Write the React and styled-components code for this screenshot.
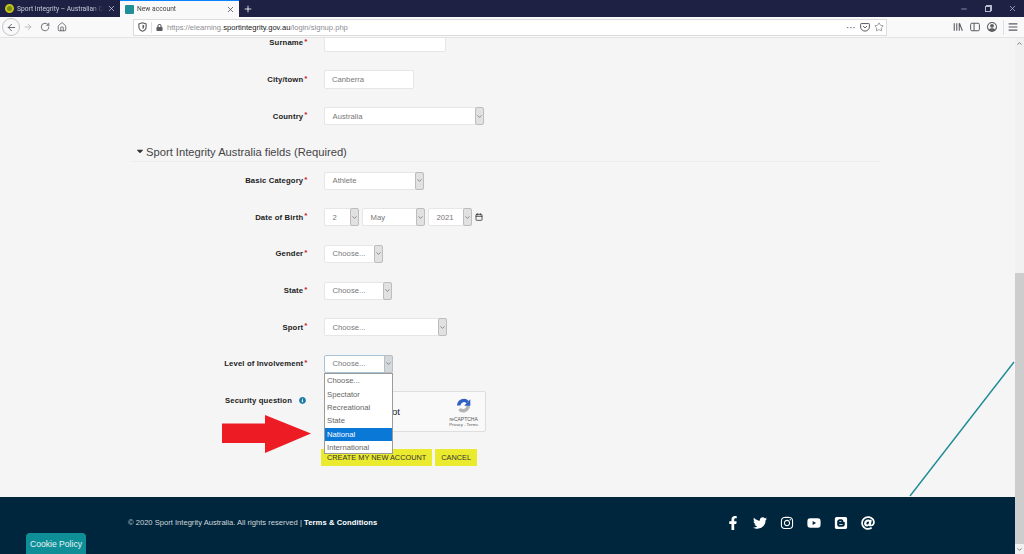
import React from "react"
import styled, { createGlobalStyle } from "styled-components"
import { FaFacebookF, FaTwitter, FaInstagram, FaYoutube, FaBlogger, FaAt, FaLock, FaCaretDown, FaInfoCircle } from "react-icons/fa"
import { ArrowLeft, ArrowRight, RotateCw, Home, X, Plus, ChevronDown, ChevronUp, Star, Minus, Calendar } from "lucide-react"

const GlobalStyle = createGlobalStyle`
  html, body {
    margin: 0;
    padding: 0;
    overflow: hidden;
    font-family: "Liberation Sans", Arial, sans-serif;
  }
  * { box-sizing: border-box; }
`

const Page = styled.div`
  width: 1024px;
  height: 554px;
  display: flex;
  flex-direction: column;
  overflow: hidden;
  background: #f5f5f5;
`

const TabBar = styled.div`
  height: 17px;
  flex: none;
  display: flex;
  align-items: stretch;
  background: #1f2144;
  color: #fff;
`

const Tab = styled.div`
  width: ${(p) => (p.$active ? "119px" : "120px")};
  display: flex;
  align-items: center;
  gap: 3px;
  padding: 0 4px 0 5px;
  font-family: Roboto, sans-serif;
  font-size: 6.7px;
  background: ${(p) => (p.$active ? "#f9f9fa" : "transparent")};
  color: ${(p) => (p.$active ? "#444" : "#c9cad6")};
  border-top: ${(p) => (p.$active ? "1px solid #0a84ff" : "none")};
`

const TabTitle = styled.span`
  flex: 1;
  overflow: hidden;
  white-space: nowrap;
  -webkit-mask-image: linear-gradient(to right, #000 85%, transparent);
  mask-image: linear-gradient(to right, #000 85%, transparent);
`

const Favicon = styled.span`
  width: 9px;
  height: 9px;
  flex: none;
  border-radius: ${(p) => (p.$square ? "1px" : "50%")};
  background: ${(p) => (p.$square ? "#1f8f9c" : "#6f8f10")};
  border: ${(p) => (p.$square ? "none" : "2px solid #c9c21a")};
`

const NewTab = styled.div`
  width: 18px;
  display: flex;
  align-items: center;
  justify-content: center;
`

const WindowControls = styled.div`
  margin-left: auto;
  display: flex;
  align-items: center;
  gap: 17px;
  padding-right: 7px;
  color: #b9bacb;
`

const RestoreIcon = styled.span`
  width: 6px;
  height: 6px;
  border: 1px solid #b9bacb;
  box-shadow: 1px -1px 0 0 #b9bacb;
`

const Toolbar = styled.div`
  height: 21px;
  flex: none;
  display: flex;
  align-items: center;
  background: #f9f9fa;
  border-bottom: 1px solid #e3e3e5;
  color: #5b5b60;
  position: relative;
  z-index: 2;
`

const BackButton = styled.div`
  width: 18px;
  height: 18px;
  margin-left: 2px;
  border: 1px solid #c4c4c7;
  border-radius: 50%;
  display: flex;
  align-items: center;
  justify-content: center;
`

const NavButtons = styled.div`
  display: flex;
  align-items: center;
  gap: 7px;
  margin-left: 3px;
  width: 110px;
`

const UrlBar = styled.div`
  width: 754px;
  height: 17px;
  display: flex;
  align-items: center;
  gap: 4px;
  padding: 0 2px 0 4px;
  background: #fff;
  border: 1px solid #dcdcde;
  font-size: 7.6px;
  color: #8d8d92;
`

const Separator = styled.span`
  width: 1px;
  height: 11px;
  background: #e0e0e2;
`

const Url = styled.span`
  flex: 1;
  white-space: nowrap;
  b {
    font-weight: 400;
    color: #222;
  }
`

const UrlDots = styled.span`
  font-weight: 700;
  letter-spacing: 0.5px;
  font-size: 8px;
  color: #5b5b60;
`

const ToolIcons = styled.div`
  display: flex;
  align-items: center;
  gap: 7px;
  margin-left: auto;
  padding-right: 6px;
`

const ToolDivider = styled.span`
  width: 1px;
  height: 15px;
  margin: 0 -3px 0 -1px;
  background: #e0e0e2;
`

const Viewport = styled.div`
  flex: 1;
  display: flex;
  min-height: 0;
`

const Content = styled.div`
  flex: 1;
  display: flex;
  flex-direction: column;
  min-width: 0;
`

const Main = styled.main`
  flex: 1;
  position: relative;
  overflow: hidden;
  background: #f5f5f5;
`

const Form = styled.div`
  margin-top: -13.5px;
  display: flex;
  flex-direction: column;
`

const Row = styled.div`
  height: 36.7px;
  display: flex;
  align-items: center;
  gap: 14.5px;
`

const Label = styled.label`
  width: 309.5px;
  padding-right: 2px;
  text-align: right;
  font-size: 7.7px;
  font-weight: 700;
  letter-spacing: 0.15px;
  color: #222;
  white-space: nowrap;
  ${(p) => p.$top && "align-self: flex-start; padding-top: 5px; padding-right: 3.5px;"}
`

const Required = styled.span`
  color: #c8202c;
  font-size: 8px;
  line-height: 0;
  margin-left: 1px;
  vertical-align: 1.5px;
`

const SelectWrap = styled.div`
  position: relative;
  flex: none;
  width: ${(p) => p.$w}px;
`

const SelectBox = styled.div`
  height: 18px;
  display: flex;
  align-items: stretch;
  background: #fff;
  border: 1px solid ${(p) => (p.$open ? "#a9c3d6" : "#e6e6e6")};
  border-radius: 2px;
  font-size: 7.7px;
  color: #777;
`

const SelectValue = styled.span`
  flex: 1;
  padding-left: 7.5px;
  align-self: center;
  white-space: nowrap;
`

const SelectArrow = styled.span`
  width: 9px;
  display: flex;
  align-items: center;
  justify-content: center;
  background: ${(p) => (p.$open ? "#d2d8dc" : "#e1e1e1")};
  border: 1px solid #bdbdbd;
  border-radius: 2px;
  margin: -1px -1px -1px 0;
  color: #555;
`

const Input = styled.div`
  width: ${(p) => p.$w}px;
  height: 19px;
  display: flex;
  align-items: center;
  padding-left: 7px;
  background: #fff;
  border: 1px solid #e6e6e6;
  border-radius: 2px;
  font-size: 7.7px;
  color: #777;
`

const DateGroup = styled.div`
  display: flex;
  align-items: center;
  gap: 3px;
  color: #333;
`

const SectionHeading = styled.div`
  height: 27.6px;
  margin: 0 135px 0 130px;
  padding: 0 0 3px 5px;
  display: flex;
  align-items: flex-end;
  gap: 1px;
  border-bottom: 1px solid #ededed;
  font-size: 11.2px;
  color: #444;
  svg {
    margin-bottom: 2px;
    flex: none;
  }
`

const Dropdown = styled.ul`
  position: absolute;
  top: 100%;
  left: -0.5px;
  right: 0;
  margin: 0;
  padding: 0;
  list-style: none;
  height: 81px;
  background: #fff;
  border: 1px solid #9b9b9b;
  z-index: 3;
  padding-top: 0.5px;
`

const Option = styled.li`
  height: 13.3px;
  line-height: 13.3px;
  padding-left: 2.5px;
  font-size: 7.7px;
  color: ${(p) => (p.$active ? "#fff" : "#666")};
  background: ${(p) => (p.$active ? "#0a78d7" : "transparent")};
`

const SecurityRow = styled.div`
  display: flex;
  gap: 14.5px;
  padding-top: 8.6px;
`

const InfoDot = styled.span`
  margin-left: 7px;
  color: #1b7aa8;
  vertical-align: -1px;
`

const Captcha = styled.div`
  width: 162px;
  height: 41px;
  display: flex;
  align-items: center;
  justify-content: space-between;
  padding: 0 7px 0 14px;
  background: #f9f9f9;
  border: 1px solid #dedede;
  border-radius: 2px;
`

const CaptchaText = styled.span`
  font-size: 9.6px;
  color: #222;
  white-space: nowrap;
`

const CaptchaBrand = styled.div`
  display: flex;
  flex-direction: column;
  align-items: center;
  padding-top: 3px;
  font-size: 5px;
  line-height: 6px;
  color: #555;
  svg {
    margin-bottom: 3px;
  }
  small {
    font-size: 4.2px;
  }
`

const Buttons = styled.div`
  display: flex;
  gap: 3px;
  margin: 17px 0 0 321px;
`

const Button = styled.button`
  height: 17.5px;
  padding: 0 6px;
  border: none;
  background: #eaea2f;
  color: #333;
  font-family: inherit;
  font-size: 7.35px;
`

const RedArrow = styled.svg`
  position: absolute;
  left: 222px;
  top: 377px;
  z-index: 2;
`

const TealLine = styled.svg`
  position: absolute;
  right: 0;
  bottom: 0;
`

const Footer = styled.footer`
  height: 57px;
  flex: none;
  position: relative;
  background: #00263e;
  display: flex;
  align-items: center;
  justify-content: space-between;
  padding: 0 140px 6px 128px;
  color: #cfd6db;
  font-size: 7.6px;
  b {
    color: #fff;
    letter-spacing: 0.1px;
  }
`

const Socials = styled.div`
  display: flex;
  align-items: center;
  gap: 13px;
  color: #fff;
  font-size: 14px;
`

const CookieButton = styled.div`
  position: absolute;
  left: 26px;
  bottom: 0;
  width: 60px;
  height: 21px;
  display: flex;
  align-items: center;
  justify-content: center;
  background: #0e8f98;
  border-radius: 4px 4px 0 0;
  color: #e8f4f5;
  font-size: 8.6px;
`

const Scrollbar = styled.div`
  width: 9px;
  flex: none;
  display: flex;
  flex-direction: column;
  align-items: center;
  background: #f1f1f1;
  color: #555;
`

const ScrollArrow = styled.span`
  height: 10px;
  display: flex;
  align-items: center;
`

const ScrollTrack = styled.div`
  flex: 1;
  width: 100%;
  padding-top: 225px;
  display: flex;
`

const ScrollThumb = styled.div`
  flex: 1;
  background: #cdcdcd;
`

function Select({ w, value, open, children }) {
  return (
    <SelectWrap $w={w}>
      <SelectBox $open={open}>
        <SelectValue>{value}</SelectValue>
        <SelectArrow $open={open}>
          <ChevronDown size={7} strokeWidth={2} />
        </SelectArrow>
      </SelectBox>
      {children}
    </SelectWrap>
  )
}

function Field({ label, children }) {
  return (
    <Row>
      <Label>
        {label}
        <Required>*</Required>
      </Label>
      {children}
    </Row>
  )
}

const involvement = ["Choose...", "Spectator", "Recreational", "State", "National", "International"]

export default function App() {
  return (
    <Page>
      <GlobalStyle />
      <TabBar>
        <Tab>
          <Favicon />
          <TabTitle>Sport Integrity – Australian Curriculum</TabTitle>
          <X size={9} />
        </Tab>
        <Tab $active>
          <Favicon $square />
          <TabTitle>New account</TabTitle>
          <X size={9} />
        </Tab>
        <NewTab>
          <Plus size={10} />
        </NewTab>
        <WindowControls>
          <Minus size={8} />
          <RestoreIcon />
          <X size={9} />
        </WindowControls>
      </TabBar>

      <Toolbar>
        <BackButton>
          <ArrowLeft size={11} />
        </BackButton>
        <NavButtons>
          <ArrowRight size={10} color="#b5b5b8" />
          <RotateCw size={10} />
          <Home size={10} />
        </NavButtons>
        <UrlBar>
          <svg width="9" height="10" viewBox="0 0 16 18" fill="none" stroke="#5b5b60" strokeWidth="2">
            <path d="M8 1.5 14.5 3.5V9c0 4-3 6.5-6.5 7.5C5 15.5 1.5 13 1.5 9V3.5Z" />
            <path d="M8 5 11 6V9c0 1.8-1.4 3-3 3.5Z" fill="#5b5b60" stroke="none" />
          </svg>
          <Separator />
          <FaLock size={7} color="#5b5b60" />
          <Url>
            https://elearning.<b>sportintegrity.gov.au</b>/login/signup.php
          </Url>
          <UrlDots>···</UrlDots>
          <svg width="10" height="10" viewBox="0 0 16 16" fill="none" stroke="#5b5b60" strokeWidth="1.6">
            <path d="M2 2.5h12a1 1 0 0 1 1 1V8a7 6.5 0 0 1-14 0V3.5a1 1 0 0 1 1-1Z" />
            <path d="M5 6.5 8 9.5 11 6.5" />
          </svg>
          <Star size={10} />
        </UrlBar>
        <ToolIcons>
          <svg width="10" height="10" viewBox="0 0 16 16" fill="none" stroke="#5b5b60" strokeWidth="1.7">
            <path d="M2 2v12M6 2v12M10 2v12M10.5 2.5 15 14" />
          </svg>
          <svg width="10" height="10" viewBox="0 0 16 16" fill="none" stroke="#5b5b60" strokeWidth="1.6">
            <rect x="1" y="2" width="14" height="12" rx="2" />
            <path d="M6.5 2v12" />
          </svg>
          <svg width="10" height="10" viewBox="0 0 16 16" fill="#5b5b60">
            <path d="M8 0a8 8 0 1 0 0 16A8 8 0 0 0 8 0Zm0 1.5a6.5 6.5 0 0 1 5 10.6C12 10.8 10.2 10 8 10s-4 .8-5 2.1A6.5 6.5 0 0 1 8 1.5Z" />
            <circle cx="8" cy="6" r="3" />
          </svg>
          <ToolDivider />
          <svg width="10" height="10" viewBox="0 0 16 16" fill="none" stroke="#5b5b60" strokeWidth="1.8">
            <path d="M1 3h14M1 8h14M1 13h14" />
          </svg>
        </ToolIcons>
      </Toolbar>

      <Viewport>
        <Content>
          <Main>
            <Form>
              <Field label="Surname">
                <Input $w={122} />
              </Field>
              <Field label="City/town">
                <Input $w={90}>Canberra</Input>
              </Field>
              <Field label="Country">
                <Select w={160} value="Australia" />
              </Field>

              <SectionHeading>
                <FaCaretDown size={10} color="#333" />
                Sport Integrity Australia fields (Required)
              </SectionHeading>

              <Field label="Basic Category">
                <Select w={100} value="Athlete" />
              </Field>
              <Field label="Date of Birth">
                <DateGroup>
                  <Select w={35} value="2" />
                  <Select w={63} value="May" />
                  <Select w={44} value="2021" />
                  <Calendar size={8} strokeWidth={2.4} />
                </DateGroup>
              </Field>
              <Field label="Gender">
                <Select w={59} value="Choose..." />
              </Field>
              <Field label="State">
                <Select w={68} value="Choose..." />
              </Field>
              <Field label="Sport">
                <Select w={123} value="Choose..." />
              </Field>
              <Field label="Level of Involvement">
                <Select w={69} value="Choose..." open>
                  <Dropdown>
                    {involvement.map((item) => (
                      <Option key={item} $active={item === "National"}>
                        {item}
                      </Option>
                    ))}
                  </Dropdown>
                </Select>
              </Field>

              <SecurityRow>
                <Label $top>
                  Security question
                  <InfoDot>
                    <FaInfoCircle size={7} />
                  </InfoDot>
                </Label>
                <Captcha>
                  <CaptchaText>I'm not a robot</CaptchaText>
                  <CaptchaBrand>
                    <svg width="17" height="15" viewBox="0 0 24 22" fill="none" strokeWidth="5">
                      <path d="M5 11a7.5 7.5 0 0 1 13-5" stroke="#2f5fc4" />
                      <path d="M19 11a7.5 7.5 0 0 1-13 5.2" stroke="#b4b4b4" />
                      <path d="M13 11.5h9V2Z" fill="#2f5fc4" />
                    </svg>
                    reCAPTCHA
                    <small>Privacy - Terms</small>
                  </CaptchaBrand>
                </Captcha>
              </SecurityRow>

              <Buttons>
                <Button type="button">CREATE MY NEW ACCOUNT</Button>
                <Button type="button">CANCEL</Button>
              </Buttons>
            </Form>

            <RedArrow width="89" height="39" viewBox="0 0 89 39">
              <polygon points="0,8.5 43,8.5 43,0 89,18.5 43,38 43,28 0,28" fill="#ed1c24" />
            </RedArrow>
            <TealLine width="106" height="136" viewBox="0 0 106 136">
              <line x1="105" y1="1" x2="1" y2="135" stroke="#1f8a96" strokeWidth="1.4" />
            </TealLine>
          </Main>

          <Footer>
            <span>
              © 2020 Sport Integrity Australia. All rights reserved | <b>Terms &amp; Conditions</b>
            </span>
            <Socials>
              <FaFacebookF />
              <FaTwitter />
              <FaInstagram />
              <FaYoutube />
              <FaBlogger />
              <FaAt />
            </Socials>
            <CookieButton>Cookie Policy</CookieButton>
          </Footer>
        </Content>

        <Scrollbar>
          <ScrollArrow>
            <ChevronUp size={7} strokeWidth={2.5} />
          </ScrollArrow>
          <ScrollTrack>
            <ScrollThumb />
          </ScrollTrack>
          <ScrollArrow>
            <ChevronDown size={7} strokeWidth={2.5} />
          </ScrollArrow>
        </Scrollbar>
      </Viewport>
    </Page>
  )
}
